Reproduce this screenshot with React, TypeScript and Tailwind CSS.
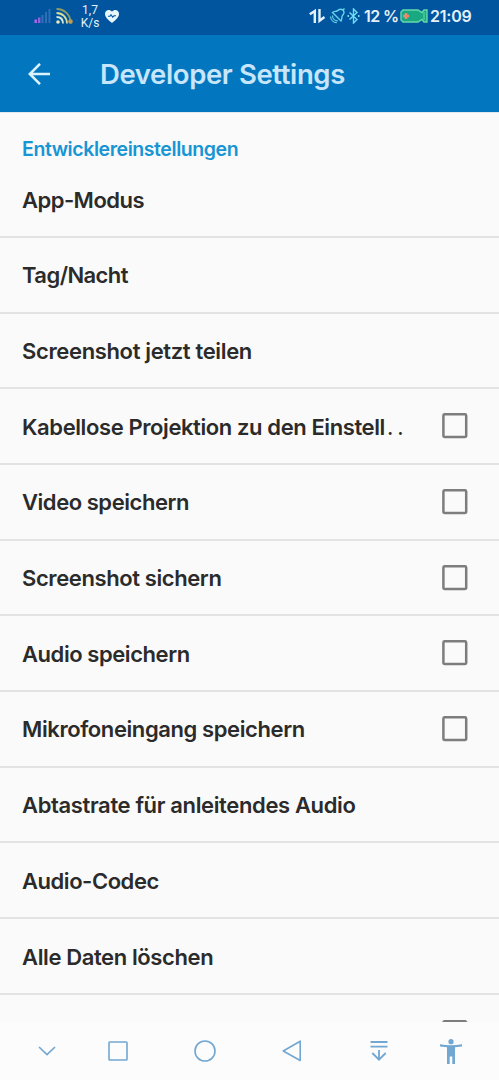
import React from "react";
import clsx from "clsx";

type Setting = {
  label: string;
  checkable?: boolean;
  truncated?: boolean;
  tracking: string;
};

const settings: Setting[] = [
  { label: "App-Modus", tracking: "tracking-[-0.52px]" },
  { label: "Tag/Nacht", tracking: "tracking-[-0.56px]" },
  { label: "Screenshot jetzt teilen", tracking: "tracking-[-0.35px]" },
  { label: "Kabellose Projektion zu den Einstell", checkable: true, truncated: true, tracking: "tracking-[-0.4px]" },
  { label: "Video speichern", checkable: true, tracking: "tracking-[-0.45px]" },
  { label: "Screenshot sichern", checkable: true, tracking: "tracking-[-0.4px]" },
  { label: "Audio speichern", checkable: true, tracking: "tracking-[-0.43px]" },
  { label: "Mikrofoneingang speichern", checkable: true, tracking: "tracking-[-0.4px]" },
  { label: "Abtastrate für anleitendes Audio", tracking: "tracking-[-0.36px]" },
  { label: "Audio-Codec", tracking: "tracking-[-0.45px]" },
  { label: "Alle Daten löschen", tracking: "tracking-[-0.38px]" },
];

const Checkbox = () => (
  <svg className="size-[26px] shrink-0" viewBox="0 0 26 26" fill="none" stroke="#7d7d7d" strokeWidth="2.5">
    <rect x="1.4" y="1.2" width="22.8" height="22.8" rx="1.5" />
  </svg>
);

const StatusBar = () => (
  <div className="flex h-[35px] shrink-0 items-start bg-[#01559f] pl-[34px] text-[#e3f1fb]">
    <svg className="mt-[9px] h-4 w-[17px]" viewBox="0 0 17 16">
      <rect x="0.5" y="10.5" width="2.4" height="3.500" fill="#b565f2" />
      <rect x="4" y="8.5" width="2.4" height="5.500" fill="#8f62e0" />
      <rect x="7.5" y="6" width="2" height="8" fill="#2f70b4" />
      <rect x="11" y="3" width="2" height="11" fill="#2f70b4" />
      <rect x="14.5" y="0" width="2" height="14" fill="#2f70b4" />
    </svg>
    <svg className="mt-[7px] ml-[5px] h-[18px] w-[18px]" viewBox="0 0 18 18" fill="none" strokeWidth="1.8">
      <path d="M0.5 2C9 2 14.5 8 15 16.5" stroke="#8f9c68" />
      <path d="M0.5 6C6.5 6 10.8 10 11 16.5" stroke="#d9de98" />
      <path d="M0.5 10C4.5 10 7 12.5 7 16.5" stroke="#d9eadb" />
      <circle cx="2" cy="15" r="1.8" fill="#e9edb4" />
      <circle cx="14.5" cy="14.500" r="2.300" fill="#c19b54" />
    </svg>
    <div className="mt-[4px] ml-[6px] w-[20px] text-center font-[Roboto,sans-serif] text-[12px] leading-[13px] whitespace-nowrap">
      <div>1,7</div>
      <div>K/s</div>
    </div>
    <svg className="mt-[9px] ml-[4px] h-[15px] w-4" viewBox="0 0 16 15">
      <path d="M8 14C4 11 1 8.2 1 4.8 1 1 5.5-.4 8 2.6 10.500-.4 15 1 15 4.800 15 8.200 12 11 8 14Z" fill="#e7f6fc" />
      <path d="M4 7.200h2L7 5.800l1.700 2.400L10 6.800h2" fill="none" stroke="#01559f" strokeWidth="1.100" />
    </svg>
    <svg className="mt-[9px] ml-[189px] h-[15px] w-[17px]" viewBox="0 0 17 15" fill="none" stroke="#e3f1fb" strokeWidth="2.400">
      <path d="M.8 5.200 5.800 2v12" />
      <path d="M10.500 0v11.800l5-3.800" />
    </svg>
    <svg className="mt-[7px] ml-[3px] h-[18px] w-[17px]" viewBox="0 0 17 18" fill="none" stroke="#66d5e8" strokeWidth="1.400">
      <path d="M3.500 5.500 12 14c1.200-1.800.5-3.500 1.300-5.200.5-1.100 1.700-1.600 1.700-3.300 0-2-1.800-3.500-3.700-3.300-1.600.1-2 1.300-3.300 1.800-1.500.6-3 .2-4.500 1.500Z" />
      <path d="m13.500 3.500 2-2" />
      <path d="M3.500 8.500c0 3 2.300 5.300 5.300 5.300M1.500 9.500c.3 3.500 3 6 6.300 6.200" strokeWidth="1.200" />
    </svg>
    <svg className="mt-[8px] ml-[1px] h-4 w-[13px]" viewBox="0 0 13 16" fill="none" stroke="#70dcf0" strokeWidth="1.400">
      <path d="m2.500 4.500 7.500 7L6.500 15V1L10 4.500l-7.500 7" />
      <path d="M.5 8H2M11 8h1.500" strokeWidth="1.800" />
    </svg>
    <span className="mt-[4px] ml-[4px] w-[36px] text-[16px] leading-6 font-semibold tracking-[-0.6px] whitespace-nowrap">12 %</span>
    <svg className="mt-[9px] h-[14px] w-7" viewBox="0 0 28 14">
      <path d="M3 1h15l4 2.500 2-2.500h3v12h-3l-2-2.500-4 2.500H3L1 11V3Z" fill="#18a982" stroke="#67d9a9" strokeWidth="1.400" />
      <path d="M6 4v6M3 7h6" stroke="#e78b70" strokeWidth="2.600" />
      <path d="M24 3v8" stroke="#67d9a9" />
    </svg>
    <span className="mt-[4px] ml-[2px] text-[16px] leading-6 font-semibold tracking-[-0.2px]">21:09</span>
  </div>
);

const Header = () => (
  <header className="flex h-[77px] shrink-0 items-center bg-[#0277bf] pl-[28px] text-[#c8e6fb]">
    <svg className="h-[22px] w-[22px]" viewBox="0 0 22 22" fill="none" stroke="#dcf2fd" strokeWidth="2.500">
      <path d="M22 11H1.500M12 .8 1.800 11 12 21.200" />
    </svg>
    <h1 className="mt-[2px] ml-[50px] text-[27.500px] font-semibold tracking-[-0.380px] whitespace-nowrap">Developer Settings</h1>
  </header>
);

const NavBar = () => (
  <nav className="flex h-[58px] shrink-0 items-center bg-[#fcfcfc] pl-[38px] text-[#72a7d2]">
    <svg className="h-[10px] w-[18px]" viewBox="0 0 18 10" fill="none" stroke="currentColor" strokeWidth="1.700">
      <path d="m1 1 8 7.500L17 1" />
    </svg>
    <svg className="ml-[52px] size-5" viewBox="0 0 20 20" fill="none" stroke="currentColor" strokeWidth="1.600">
      <rect x="1" y="1" width="18" height="18" rx="0.800" />
    </svg>
    <svg className="ml-[66px] size-[22px]" viewBox="0 0 22 22" fill="none" stroke="currentColor" strokeWidth="1.600">
      <circle cx="11" cy="11" r="10" />
    </svg>
    <svg className="ml-[66px] h-[22px] w-5" viewBox="0 0 20 22" fill="none" stroke="currentColor" strokeWidth="1.600" strokeLinejoin="round">
      <path d="M18.200 1.200v19.300L1.200 11Z" />
    </svg>
    <svg className="ml-[68px] h-5 w-[18px]" viewBox="0 0 18 20" fill="none" stroke="currentColor" strokeWidth="1.800">
      <path d="M.5 1h17M.5 5.700h17M9 9v9.500M2.300 12 9 18.700 15.700 12" />
    </svg>
    <svg className="ml-[52px] h-[25px] w-[22px]" viewBox="0 0 22 25" fill="currentColor">
      <circle cx="11" cy="2.700" r="2.600" />
      <path d="M0 5.200C7 6.500 15 6.500 22 5.200v2.300l-7 .8v16.600h-2.700v-7.500H9.700v7.500H7V8.300L0 7.500Z" />
    </svg>
  </nav>
);

const App = () => {
  return (
    <div className="flex h-[1080px] w-[499px] flex-col overflow-hidden bg-[#fafafa] font-[Inter,sans-serif]">
      <StatusBar />
      <Header />
      <main className="flex min-h-0 flex-1 flex-col overflow-hidden border-t border-[#dfe7ed]">
        <h2 className="h-[49.300px] shrink-0 pt-[22px] pl-[22px] text-[19.500px] leading-7 font-semibold tracking-[-0.430px] text-[#1795d4]">
          Entwicklereinstellungen
        </h2>
        {settings.map((item) => (
          <div
            key={item.label}
            className="flex h-[75.700px] shrink-0 items-center justify-between border-b-2 border-[#e3e3e3] pr-[31px] pl-[22px]"
          >
            <span className={clsx("pt-[2px] text-[22px] font-semibold whitespace-nowrap text-[#2b2b2b]", item.tracking)}>
              {item.label}
              {item.truncated && <span className="ml-[2px] font-normal tracking-[4px]">..</span>}
            </span>
            {item.checkable && <Checkbox />}
          </div>
        ))}
        <div className="flex h-[75.700px] shrink-0 items-center justify-end pr-[31px]">
          <Checkbox />
        </div>
      </main>
      <NavBar />
    </div>
  );
};

export default App;
